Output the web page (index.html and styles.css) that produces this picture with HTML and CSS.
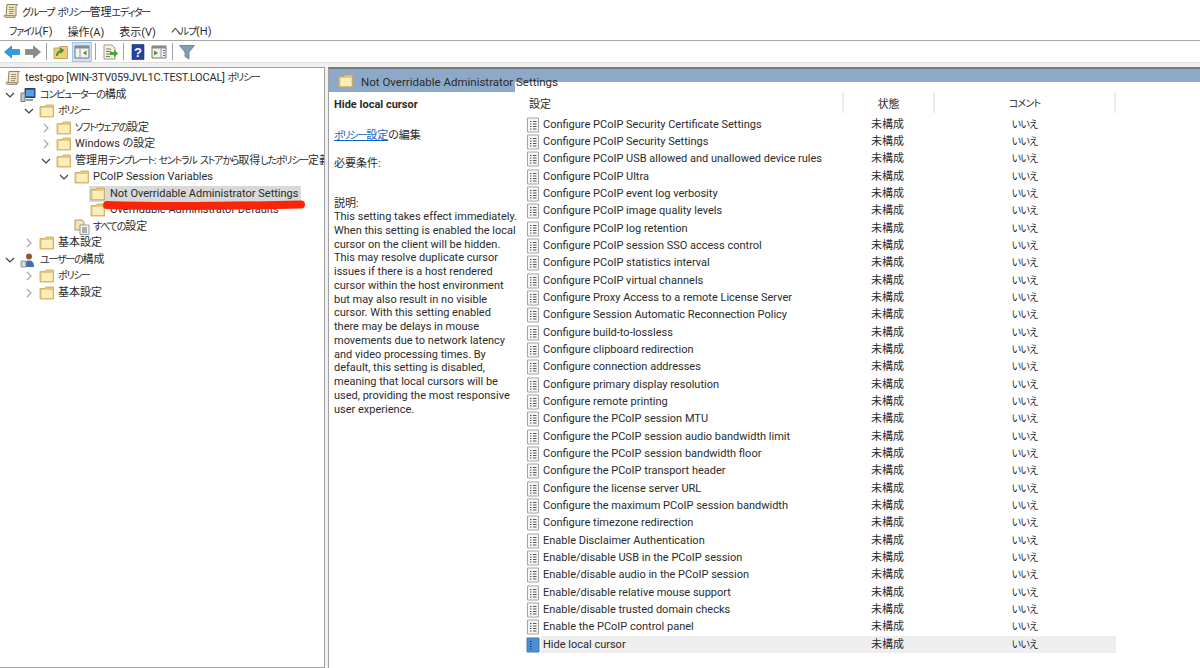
FILE: index.html
```html
<!DOCTYPE html>
<html lang="ja">
<head>
    <meta charset="UTF-8">
    <meta name="viewport" content="width=device-width, initial-scale=1.0">
    <title>グループ ポリシー管理エディター</title>
    <link rel="stylesheet" href="styles.css">
</head>
<body>
    <svg class="defs" width="0" height="0">
        <symbol id="folder" viewBox="0 0 16 16">
            <path d="M1 3.500h5l1-1.500h7.500v12H1z" fill="#e8c878" stroke="#c9a95c" stroke-width="0.8"/>
            <path d="M2.500 5h11v8h-11z" fill="#fbeebb"/>
        </symbol>
        <symbol id="doc" viewBox="0 0 16 16">
            <path d="M2.500 1h11v14h-11z" fill="#f7f7f7" stroke="#a4a4a4"/>
            <path d="M5 4.500h1.500M8 4.500h3.500M5 7h1.500M8 7h3.500M5 9.500h1.500M8 9.500h3.500M5 12h1.500M8 12h3.500" stroke="#555" stroke-width="1.100"/>
        </symbol>
        <symbol id="docsel" viewBox="0 0 16 16">
            <path d="M2 1h12v14H2z" fill="#4d8fd6" stroke="#3a78bd"/>
            <path d="M5 4.500h1.500M5 7h1.500M5 9.500h1.500M5 12h1.500" stroke="#12305a" stroke-width="1.100"/>
        </symbol>
        <symbol id="scroll" viewBox="0 0 16 16">
            <path d="M4 1.500h10.500l-1.500 2v9.500H3z" fill="#efe3c0" stroke="#8d8266"/>
            <path d="M1 12.500h10.500c0 1 .5 2 .5 2H2.500c-1 0-1.500-1-1.500-2z" fill="#d8cba5" stroke="#8d8266" stroke-width="0.8"/>
            <path d="M6 4.500h5M6 6.500h5M6 8.500h5M6 10.500h4" stroke="#8d8266" stroke-width="0.8"/>
        </symbol>
        <symbol id="chev-r" viewBox="0 0 10 10">
            <path d="M3 1l4 4-4 4" fill="none" stroke="#a6a6a6" stroke-width="1.200"/>
        </symbol>
        <symbol id="chev-d" viewBox="0 0 10 10">
            <path d="M1 3l4 4 4-4" fill="none" stroke="#404040" stroke-width="1.200"/>
        </symbol>
    </svg>

    <div class="titlebar">
        <svg class="ico"><use href="#scroll"/></svg>
        <span><b class="kana">グループ ポリシー</b>管理<b class="kana">エディター</b></span>
    </div>

    <div class="menubar">
        <span><b class="kana">ファイル</b>(F)</span>
        <span>操作(A)</span>
        <span>表示(V)</span>
        <span><b class="kana">ヘルプ</b>(H)</span>
    </div>

    <div class="toolbar">
        <button class="tool">
            <svg viewBox="0 0 16 16"><path d="M.5 8l7-6v3.500h8v5h-8V14z" fill="#2f9be0" stroke="#1d6fb0" stroke-width="0.6"/></svg>
        </button>
        <button class="tool">
            <svg viewBox="0 0 16 16"><path d="M15.500 8l-7-6v3.500h-8v5h8V14z" fill="#8b8b8b" stroke="#6f6f6f" stroke-width="0.6"/></svg>
        </button>
        <i class="sep"></i>
        <button class="tool">
            <svg viewBox="0 0 16 16"><path d="M1 4h5l1-1.500h7.500V14.500H1z" fill="#edcf80" stroke="#b8954a" stroke-width="0.8"/><path d="M4 12c0-3 1-4.500 4-5" fill="none" stroke="#3f9a2c" stroke-width="2"/><path d="M6.500 3.500L11.500 6 7.500 10z" fill="#3f9a2c"/></svg>
        </button>
        <button class="tool active">
            <svg viewBox="0 0 16 16"><path d="M1 2h14v12H1z" fill="#f2f2f2" stroke="#777"/><path d="M1 2h14v2.500H1z" fill="#8a8a8a"/><path d="M6 4.500v9.500" stroke="#999"/><path d="M12.500 6.500v5L9 9z" fill="#3f9a2c"/></svg>
        </button>
        <i class="sep"></i>
        <button class="tool">
            <svg viewBox="0 0 16 16"><path d="M2 1h8l3 3v11H2z" fill="#f8f2dc" stroke="#999"/><path d="M4 5h5M4 7.500h5M4 10h4M4 12.500h4" stroke="#777"/><path d="M8 8h4V5.500L16 9.500l-4 4V11H8z" fill="#46a632"/></svg>
        </button>
        <i class="sep"></i>
        <button class="tool">
            <svg viewBox="0 0 16 16"><path d="M2 .5h12v15H2z" fill="#23439c" stroke="#162b66" stroke-width="0.6"/><text x="8" y="13" text-anchor="middle" class="help-mark">?</text></svg>
        </button>
        <button class="tool">
            <svg viewBox="0 0 16 16"><path d="M1 2h14v12H1z" fill="#f2f2f2" stroke="#777"/><path d="M1 2h14v2.500H1z" fill="#8a8a8a"/><path d="M10 4.500v9.500" stroke="#999"/><path d="M3 6.500v5L7 9z" fill="#3f9a2c"/><path d="M12 6.500h2M12 9h2M12 11.500h2" stroke="#3a6fb0"/></svg>
        </button>
        <i class="sep"></i>
        <button class="tool">
            <svg viewBox="0 0 16 16"><path d="M.5 1.500h15L10 8v7l-4-2.500V8z" fill="#7f9fb8" stroke="#5b7a92" stroke-width="0.8"/></svg>
        </button>
    </div>

    <div class="main">
        <div class="tree">
            <div class="node l0"><svg class="ico"><use href="#scroll"/></svg><span><b class="tight">test-gpo [WIN-3TV059JVL1C.TEST.LOCAL]</b> <b class="kana">ポリシー</b></span></div>
            <div class="node l0">
                <svg class="chev"><use href="#chev-d"/></svg>
                <svg class="ico" viewBox="0 0 16 16"><path d="M5 1.500h10v9H5z" fill="#2f5fa8" stroke="#24406e"/><path d="M6 3h8v6H6z" fill="#5c9fe0"/><path d="M1 6h4v8.500H1z" fill="#c6c6c6" stroke="#777"/><path d="M6 12h7v2H6z" fill="#9a9a9a"/></svg>
                <span><b class="kana">コンピューターの</b>構成</span>
            </div>
            <div class="node l1"><svg class="chev"><use href="#chev-d"/></svg><svg class="ico"><use href="#folder"/></svg><span><b class="kana">ポリシー</b></span></div>
            <div class="node l2"><svg class="chev"><use href="#chev-r"/></svg><svg class="ico"><use href="#folder"/></svg><span><b class="kana">ソフトウェアの</b>設定</span></div>
            <div class="node l2"><svg class="chev"><use href="#chev-r"/></svg><svg class="ico"><use href="#folder"/></svg><span>Windows の設定</span></div>
            <div class="node l2"><svg class="chev"><use href="#chev-d"/></svg><svg class="ico"><use href="#folder"/></svg><span>管理用<b class="kana">テンプレート: セントラル ストアから</b>取得<b class="kana">したポリシー</b>定義</span></div>
            <div class="node l3"><svg class="chev"><use href="#chev-d"/></svg><svg class="ico"><use href="#folder"/></svg><span>PCoIP Session Variables</span></div>
            <div class="node l4 selected"><svg class="ico"><use href="#folder"/></svg><span>Not Overridable Administrator Settings</span></div>
            <div class="node l4"><svg class="ico"><use href="#folder"/></svg><span>Overridable Administrator Defaults</span></div>
            <div class="node l3 nochev">
                <svg class="ico" viewBox="0 0 16 16"><path d="M1 1h7l2 2v8H1z" fill="#f3e3b0" stroke="#a89a70"/><path d="M6 6h9v9.500H6z" fill="#f5f5f5" stroke="#999"/><path d="M8 9h5M8 11h5M8 13h5" stroke="#666"/></svg>
                <span><b class="kana">すべての</b>設定</span>
            </div>
            <div class="node l1"><svg class="chev"><use href="#chev-r"/></svg><svg class="ico"><use href="#folder"/></svg><span>基本設定</span></div>
            <div class="node l0">
                <svg class="chev"><use href="#chev-d"/></svg>
                <svg class="ico" viewBox="0 0 16 16"><circle cx="9" cy="4.500" r="3" fill="#8a5a3a"/><path d="M4 15c0-5 2-6.500 5-6.500s5 1.500 5 6.500z" fill="#3f6fae"/><path d="M1 9h5v6H1z" fill="#cfd6de" stroke="#7c8794" stroke-width="0.8"/></svg>
                <span><b class="kana">ユーザーの</b>構成</span>
            </div>
            <div class="node l1"><svg class="chev"><use href="#chev-r"/></svg><svg class="ico"><use href="#folder"/></svg><span><b class="kana">ポリシー</b></span></div>
            <div class="node l1"><svg class="chev"><use href="#chev-r"/></svg><svg class="ico"><use href="#folder"/></svg><span>基本設定</span></div>
            <!-- 手書きの赤線 -->
            <svg class="redline" viewBox="0 0 206 12"><path d="M6 6C60 8 130 7 200 5.500" fill="none" stroke="#fa2408" stroke-width="8" stroke-linecap="round"/></svg>
        </div>

        <div class="pane">
            <div class="pane-head">
                <svg class="ico big"><use href="#folder"/></svg>
                <span>Not Overridable Administrator Settings</span>
            </div>
            <div class="pane-tab"></div>
            <div class="pane-body">
                <div class="desc">
                    <h3>Hide local cursor</h3>
                    <p class="edit"><a href="#"><b class="kana">ポリシー</b>設定</a>の編集</p>
                    <p class="req">必要条件:</p>
                    <p class="label">説明:</p>
                    <p>This setting takes effect immediately. When this setting is enabled the local cursor on the client will be hidden. This may resolve duplicate cursor issues if there is a host rendered cursor within the host environment but may also result in no visible cursor. With this setting enabled there may be delays in mouse movements due to network latency and video processing times. By default, this setting is disabled, meaning that local cursors will be used, providing the most responsive user experience.</p>
                </div>
                <div class="list">
                    <div class="list-head">
                        <div class="col-name">設定</div>
                        <div class="col-state">状態</div>
                        <div class="col-comment">コメント</div>
                    </div>
                    <div class="row"><svg class="ico"><use href="#doc"/></svg><div class="cell-name">Configure PCoIP Security Certificate Settings</div><div class="col-state">未構成</div><div class="col-comment">いいえ</div></div>
                    <div class="row"><svg class="ico"><use href="#doc"/></svg><div class="cell-name">Configure PCoIP Security Settings</div><div class="col-state">未構成</div><div class="col-comment">いいえ</div></div>
                    <div class="row"><svg class="ico"><use href="#doc"/></svg><div class="cell-name">Configure PCoIP USB allowed and unallowed device rules</div><div class="col-state">未構成</div><div class="col-comment">いいえ</div></div>
                    <div class="row"><svg class="ico"><use href="#doc"/></svg><div class="cell-name">Configure PCoIP Ultra</div><div class="col-state">未構成</div><div class="col-comment">いいえ</div></div>
                    <div class="row"><svg class="ico"><use href="#doc"/></svg><div class="cell-name">Configure PCoIP event log verbosity</div><div class="col-state">未構成</div><div class="col-comment">いいえ</div></div>
                    <div class="row"><svg class="ico"><use href="#doc"/></svg><div class="cell-name">Configure PCoIP image quality levels</div><div class="col-state">未構成</div><div class="col-comment">いいえ</div></div>
                    <div class="row"><svg class="ico"><use href="#doc"/></svg><div class="cell-name">Configure PCoIP log retention</div><div class="col-state">未構成</div><div class="col-comment">いいえ</div></div>
                    <div class="row"><svg class="ico"><use href="#doc"/></svg><div class="cell-name">Configure PCoIP session SSO access control</div><div class="col-state">未構成</div><div class="col-comment">いいえ</div></div>
                    <div class="row"><svg class="ico"><use href="#doc"/></svg><div class="cell-name">Configure PCoIP statistics interval</div><div class="col-state">未構成</div><div class="col-comment">いいえ</div></div>
                    <div class="row"><svg class="ico"><use href="#doc"/></svg><div class="cell-name">Configure PCoIP virtual channels</div><div class="col-state">未構成</div><div class="col-comment">いいえ</div></div>
                    <div class="row"><svg class="ico"><use href="#doc"/></svg><div class="cell-name">Configure Proxy Access to a remote License Server</div><div class="col-state">未構成</div><div class="col-comment">いいえ</div></div>
                    <div class="row"><svg class="ico"><use href="#doc"/></svg><div class="cell-name">Configure Session Automatic Reconnection Policy</div><div class="col-state">未構成</div><div class="col-comment">いいえ</div></div>
                    <div class="row"><svg class="ico"><use href="#doc"/></svg><div class="cell-name">Configure build-to-lossless</div><div class="col-state">未構成</div><div class="col-comment">いいえ</div></div>
                    <div class="row"><svg class="ico"><use href="#doc"/></svg><div class="cell-name">Configure clipboard redirection</div><div class="col-state">未構成</div><div class="col-comment">いいえ</div></div>
                    <div class="row"><svg class="ico"><use href="#doc"/></svg><div class="cell-name">Configure connection addresses</div><div class="col-state">未構成</div><div class="col-comment">いいえ</div></div>
                    <div class="row"><svg class="ico"><use href="#doc"/></svg><div class="cell-name">Configure primary display resolution</div><div class="col-state">未構成</div><div class="col-comment">いいえ</div></div>
                    <div class="row"><svg class="ico"><use href="#doc"/></svg><div class="cell-name">Configure remote printing</div><div class="col-state">未構成</div><div class="col-comment">いいえ</div></div>
                    <div class="row"><svg class="ico"><use href="#doc"/></svg><div class="cell-name">Configure the PCoIP session MTU</div><div class="col-state">未構成</div><div class="col-comment">いいえ</div></div>
                    <div class="row"><svg class="ico"><use href="#doc"/></svg><div class="cell-name">Configure the PCoIP session audio bandwidth limit</div><div class="col-state">未構成</div><div class="col-comment">いいえ</div></div>
                    <div class="row"><svg class="ico"><use href="#doc"/></svg><div class="cell-name">Configure the PCoIP session bandwidth floor</div><div class="col-state">未構成</div><div class="col-comment">いいえ</div></div>
                    <div class="row"><svg class="ico"><use href="#doc"/></svg><div class="cell-name">Configure the PCoIP transport header</div><div class="col-state">未構成</div><div class="col-comment">いいえ</div></div>
                    <div class="row"><svg class="ico"><use href="#doc"/></svg><div class="cell-name">Configure the license server URL</div><div class="col-state">未構成</div><div class="col-comment">いいえ</div></div>
                    <div class="row"><svg class="ico"><use href="#doc"/></svg><div class="cell-name">Configure the maximum PCoIP session bandwidth</div><div class="col-state">未構成</div><div class="col-comment">いいえ</div></div>
                    <div class="row"><svg class="ico"><use href="#doc"/></svg><div class="cell-name">Configure timezone redirection</div><div class="col-state">未構成</div><div class="col-comment">いいえ</div></div>
                    <div class="row"><svg class="ico"><use href="#doc"/></svg><div class="cell-name">Enable Disclaimer Authentication</div><div class="col-state">未構成</div><div class="col-comment">いいえ</div></div>
                    <div class="row"><svg class="ico"><use href="#doc"/></svg><div class="cell-name">Enable/disable USB in the PCoIP session</div><div class="col-state">未構成</div><div class="col-comment">いいえ</div></div>
                    <div class="row"><svg class="ico"><use href="#doc"/></svg><div class="cell-name">Enable/disable audio in the PCoIP session</div><div class="col-state">未構成</div><div class="col-comment">いいえ</div></div>
                    <div class="row"><svg class="ico"><use href="#doc"/></svg><div class="cell-name">Enable/disable relative mouse support</div><div class="col-state">未構成</div><div class="col-comment">いいえ</div></div>
                    <div class="row"><svg class="ico"><use href="#doc"/></svg><div class="cell-name">Enable/disable trusted domain checks</div><div class="col-state">未構成</div><div class="col-comment">いいえ</div></div>
                    <div class="row"><svg class="ico"><use href="#doc"/></svg><div class="cell-name">Enable the PCoIP control panel</div><div class="col-state">未構成</div><div class="col-comment">いいえ</div></div>
                    <div class="row selected"><svg class="ico"><use href="#docsel"/></svg><div class="cell-name">Hide local cursor</div><div class="col-state">未構成</div><div class="col-comment">いいえ</div></div>
                </div>
            </div>
        </div>
    </div>
</body>
</html>
```

FILE: styles.css
```css
* {
    margin: 0;
    padding: 0;
    box-sizing: border-box;
}

html, body {
    height: 100%;
    overflow: hidden;
}

body {
    font-family: "Roboto", "Noto Sans CJK JP", sans-serif;
    font-size: 11px;
    font-feature-settings: "palt";
    color: #2b2b2b;
    background: #fff;
    display: flex;
    flex-direction: column;
}

b {
    font-weight: normal;
}

/* かなを詰めて元の UI フォントの幅に合わせる */
.kana {
    font-size: 10px;
    letter-spacing: -1.2px;
    word-spacing: 2px;
}

.tight {
    letter-spacing: -0.2px;
}

.defs {
    position: absolute;
}

.ico {
    width: 16px;
    height: 16px;
    flex: none;
}

.titlebar {
    height: 21px;
    display: flex;
    align-items: center;
    gap: 3px;
    padding-left: 3px;
}

.menubar {
    height: 20px;
    display: flex;
    align-items: center;
    gap: 15px;
    padding-left: 9px;
    border-bottom: 1px solid #a8a8a8;
}

.toolbar {
    height: 22px;
    display: flex;
    align-items: center;
    gap: 1px;
    padding-left: 2px;
    border-bottom: 1px solid #e0e0e0;
}

.tool {
    width: 20px;
    height: 20px;
    background: none;
    border: 1px solid transparent;
    display: flex;
    align-items: center;
    justify-content: center;
}

.tool svg {
    width: 16px;
    height: 16px;
}

.tool.active {
    background: #cce4f7;
    border-color: #9cc8ec;
}

.sep {
    width: 1px;
    height: 17px;
    margin: 0 3px 0 2px;
    background: #a0a0a0;
}

.help-mark {
    font-family: "Liberation Sans", sans-serif;
    font-size: 13px;
    font-weight: bold;
    fill: #fff;
}

.main {
    flex: 1;
    min-height: 0;
    display: flex;
    background: #f0f0f0;
    padding-top: 4px;
    gap: 3px;
}

.tree {
    width: 325px;
    position: relative;
    overflow: hidden;
    background: #fff;
    border: 1px solid #a0a0a0;
    border-left: none;
    padding: 2px 0 0 0;
}

.node {
    height: 16.5px;
    display: flex;
    align-items: center;
    white-space: nowrap;
    line-height: 16px;
}

.node span {
    min-width: 0;
    overflow: hidden;
}

.node .ico {
    margin-right: 3px;
}

.chev {
    width: 10px;
    height: 10px;
    margin-right: 5px;
    flex: none;
}

.l0 { padding-left: 5px; }
.l1 { padding-left: 24px; }
.l2 { padding-left: 41px; }
.l3 { padding-left: 59px; }
.l4 { padding-left: 90px; }
.nochev { padding-left: 74px; }

.l0 .ico {
    margin-right: 4px;
}

.node.selected {
    width: fit-content;
    margin-left: 89px;
    padding: 0 3px 0 1px;
    background: #d9d9d9;
}

.node.selected .ico,
.l4 .ico {
    margin-right: 4px;
}

.redline {
    position: absolute;
    left: 101px;
    top: 131px;
    width: 206px;
    height: 12px;
}

.pane {
    flex: 1;
    min-width: 0;
    position: relative;
    background: #fff;
    border-top: 2px solid #7a7a7a;
    border-left: 1px solid #a0a0a0;
    display: flex;
    flex-direction: column;
}

.pane-head {
    height: 23px;
    flex: none;
    background: linear-gradient(#8ca9c9, #8ca9c9) left top / 186px 100% no-repeat,
                linear-gradient(#8ca9c9, #8ca9c9) left top / 100% 13px no-repeat;
    display: flex;
    align-items: center;
    gap: 7px;
    padding-left: 9px;
    font-size: 11.500px;
    position: relative;
    z-index: 1;
}

.pane-head span {
    position: relative;
    top: 1px;
}

.pane-tab {
    position: absolute;
    left: 185px;
    top: 13px;
    width: 14px;
    height: 10px;
    background: #fff;
    border-top-left-radius: 10px;
}

.pane-body {
    flex: 1;
    min-height: 0;
    display: flex;
}

.desc {
    width: 196px;
    flex: none;
    padding: 6px 7px 0 5px;
    line-height: 13.750px;
}

.desc h3 {
    font-size: 11px;
    font-weight: bold;
    margin-bottom: 17px;
}

.desc .edit {
    margin-bottom: 14px;
}

.desc .edit a {
    color: #0b63c4;
}

.desc .req {
    margin-bottom: 27px;
}

.desc .label {
    margin-bottom: -1px;
}

.list {
    flex: 1;
    min-width: 0;
}

.list-head {
    height: 21px;
    display: flex;
    align-items: center;
    margin-bottom: 3px;
}

.list-head .col-name {
    width: 317px;
    padding-left: 4px;
    height: 100%;
    display: flex;
    align-items: center;
}

.list-head .col-state,
.list-head .col-comment {
    height: 100%;
    display: flex;
    align-items: center;
    justify-content: center;
    border-left: 2px solid #ececec;
}

.list-head .col-comment {
    border-right: 2px solid #ececec;
}

.col-state {
    width: 91px;
    flex: none;
    text-align: center;
}

.col-comment {
    width: 183px;
    flex: none;
    text-align: center;
    font-size: 10px;
    letter-spacing: -0.8px;
}

.row {
    height: 17.330px;
    display: flex;
    align-items: center;
    width: 591px;
    white-space: nowrap;
    line-height: 16px;
}

.row .ico {
    margin-right: 2px;
}

.cell-name {
    width: 299px;
    flex: none;
}

.row.selected {
    background: linear-gradient(#eeeeee, #eeeeee) 16px 0 no-repeat;
}
```
